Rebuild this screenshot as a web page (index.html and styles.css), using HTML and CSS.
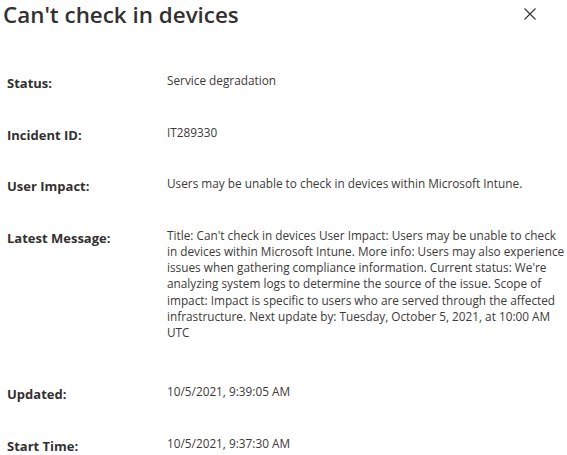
FILE: index.html
```html
<!DOCTYPE html>
<html lang="en">

<head>
    <meta charset="UTF-8">
    <meta name="viewport" content="width=device-width, initial-scale=1.0">
    <title>Can't check in devices</title>
    <link rel="stylesheet" href="styles.css">
</head>

<body>
    <!-- 標題列 -->
    <div class="header">
        <h1>Can't check in devices</h1>
        <button class="close" title="Close">
            <svg width="12" height="12" viewBox="0 0 12 12">
                <path d="M0.5 0.5 L11.5 11.5 M11.5 0.5 L0.5 11.5" stroke="#333" stroke-width="1.1" fill="none" />
            </svg>
        </button>
    </div>

    <!-- 事件詳細資料 -->
    <div class="details">
        <div class="label">Status:</div>
        <div class="value">Service degradation</div>

        <div class="label">Incident ID:</div>
        <div class="value">IT289330</div>

        <div class="label">User Impact:</div>
        <div class="value">Users may be unable to check in devices within Microsoft Intune.</div>

        <div class="label">Latest Message:</div>
        <div class="value message">Title: Can't check in devices User Impact: Users may be unable to check<br>
            in devices within Microsoft Intune. More info: Users may also experience<br>
            issues when gathering compliance information. Current status: We're<br>
            analyzing system logs to determine the source of the issue. Scope of<br>
            impact: Impact is specific to users who are served through the affected<br>
            infrastructure. Next update by: Tuesday, October 5, 2021, at 10:00 AM<br>
            UTC</div>

        <div class="label">Updated:</div>
        <div class="value">10/5/2021, 9:39:05 AM</div>

        <div class="label">Start Time:</div>
        <div class="value">10/5/2021, 9:37:30 AM</div>
    </div>
</body>

</html>
```

FILE: styles.css
```css
body {
    font-family: "Open Sans", Arial, sans-serif;
    margin: 0;
    padding: 0;
    background: #fff;
    color: #333;
}

.header {
    display: flex;
    justify-content: space-between;
    align-items: flex-start;
    height: 52px;
}

h1 {
    margin: 0;
    padding: 0 0 0 3px;
    font-size: 22.4px;
    font-weight: 600;
    line-height: 30.5px;
    color: #323130;
}

.close {
    background: none;
    border: none;
    padding: 0;
    margin: 8px 31px 0 0;
    cursor: pointer;
    line-height: 0;
}

.details {
    display: grid;
    grid-template-columns: 160px 397px;
    row-gap: 31.5px;
    padding: 20px 3px 0 7px;
}

.label {
    font-size: 13px;
    font-weight: 700;
    line-height: 18px;
    padding-top: 2px;
    color: #323130;
}

.value {
    font-size: 11.8px;
    line-height: 16.3px;
    color: #3b3a39;
}

.message {
    white-space: nowrap;
    margin-bottom: 11px;
}
```
